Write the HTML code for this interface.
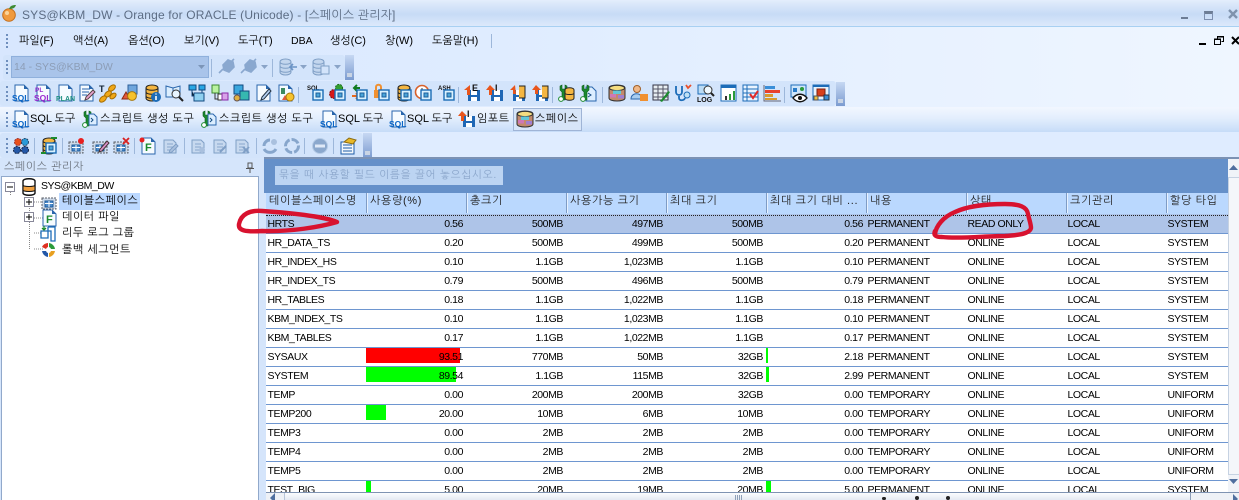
<!DOCTYPE html>
<html lang="ko"><head><meta charset="utf-8"><title>Orange for ORACLE</title>
<style>
html{margin:0;padding:0;overflow:hidden;width:1239px;height:500px}
body{margin:0;padding:0;width:1239px;height:500px;overflow:hidden;position:relative;background:#dfecff;font-family:"Liberation Sans","NanumGothic","Noto Sans CJK KR",sans-serif;color:#000}
div,span,svg{position:absolute}
.t{white-space:nowrap;font-size:11px;line-height:14px}
.pill{background:#d3e4fb;border-radius:3px}
.chev{background:linear-gradient(#c6d8f3,#7b9bd0);width:9px}
.chev:after{content:"";position:absolute;left:2px;bottom:3px;width:5px;height:4px;background:#c9d4e4}
.grip{left:6px;width:2px;border-left:2px dotted #6f8fbd}
.sep{width:1px;background:#9db7da}
.m{top:34px}
svg.i{width:18px;height:18px;overflow:visible}
svg text{font-family:"Liberation Sans",sans-serif;font-weight:bold}
.r2 svg.i{top:3px}.r4 svg.i{top:4px}.r3 svg.i{top:3px}
.r2 .sep{top:6px;height:16px}.r4 .sep{top:5px;height:16px}
.r3 .t{letter-spacing:.55px}
.r3 .s{letter-spacing:0}
.h{top:0;height:20px;width:96px;border-left:1px solid #7f9cc5;box-shadow:inset 1px 0 #e6f1ff;font-size:11px;line-height:16px;padding-left:3px;color:#222;white-space:nowrap;letter-spacing:.65px;overflow:hidden}
table{position:absolute;left:0;top:1px;width:1000px;border-collapse:collapse;table-layout:fixed;font-size:10.5px;letter-spacing:-.42px;color:#000}
td{height:18px;padding:0 3px 0 0;border-bottom:1px solid #6e96d0;text-align:right;white-space:nowrap;overflow:hidden;line-height:18px}
td:nth-child(1),td:nth-child(7),td:nth-child(8),td:nth-child(9),td:nth-child(10){text-align:left;padding:0 0 0 1.5px}
.tr{left:62px;font-size:11px;letter-spacing:.55px}
</style></head><body>
<svg width="0" height="0" style="left:0;top:0"><defs>
<symbol id="d" viewBox="0 0 18 18"><path d="M3 1h9l4 4v12H3z" fill="#f6fbff" stroke="#2a66ac"/><path d="M12 1v4h4z" fill="#2a66ac"/></symbol>
<symbol id="db" viewBox="0 0 18 18"><path d="M3 4c0-4 12-4 12 0v10c0 4-12 4-12 0z" fill="#f4b642" stroke="#222"/><path d="M3 4c0 3 12 3 12 0M3 8c0 3 12 3 12 0M3 12c0 3 12 3 12 0" fill="none" stroke="#222"/></symbol>
<symbol id="dg" viewBox="0 0 18 18"><path d="M1 4c0-4 11-4 11 0v10c0 4-11 4-11 0z" fill="#c3d6ee" stroke="#7f9fc6"/><path d="M1 4c0 3 11 3 11 0M1 8c0 3 11 3 11 0M1 12c0 3 11 3 11 0" fill="none" stroke="#7f9fc6"/></symbol>
<symbol id="w" viewBox="0 0 18 18"><rect x="6" y="6" width="10" height="10" fill="#d9f2ff" stroke="#1b6cb5" stroke-width="1.400"/><rect x="9" y="9" width="4" height="4" fill="#4aa5d8" stroke="#1b5e9b"/></symbol>
<symbol id="wr" viewBox="0 0 18 18"><path d="M3 2v4l2 2v8h3V8l2-2V2L8 1v4H5V1z" fill="#1c8a2e" stroke="#0d5c1a" stroke-width=".6"/><circle cx="4" cy="15" r="2.400" fill="#fff" stroke="#1c8a2e"/></symbol>
<symbol id="sp" viewBox="0 0 18 18"><path d="M1 4c0-4 16-4 16 0v10c0 4-16 4-16 0z" fill="#c38a6c" stroke="#333"/><ellipse cx="9" cy="4" rx="7.500" ry="2.600" fill="#f5dd80" stroke="#333"/><rect x="5" y="6.500" width="8" height="3.500" fill="#63c7d8"/><rect x="2" y="10" width="6" height="3.500" fill="#cf78b6"/><rect x="10" y="11" width="6" height="3.500" fill="#a07fd0"/></symbol>
<symbol id="disk" viewBox="0 0 18 18"><path d="M5 6h12v11H5z" fill="#1f67b5"/><rect x="8" y="6" width="6" height="5" fill="#fff"/><rect x="8" y="13" width="6" height="4" fill="#fff"/></symbol>
<symbol id="g" viewBox="0 0 18 18"><rect x="2" y="5" width="14" height="11" fill="#cdd9e8" stroke="#5a5f68" stroke-dasharray="2 1"/><rect x="5" y="8" width="8" height="6" fill="#4a8acb" stroke="#1f5a99"/><path d="M5 10.500h8M9 8v6" stroke="#fff"/></symbol>
<symbol id="gd" viewBox="0 0 18 18"><path d="M3 3h9l3 3v10H3z" fill="#c7d9ef" stroke="#7f9fc6"/><path d="M6 7h6M6 10h6M6 13h6" stroke="#88a6cc"/></symbol>
<symbol id="pl" viewBox="0 0 20 16"><path d="M2 15l4-4M6 7l5-5 5 2 1 5-5 5-5-2zM13 5l4-4" fill="#8aa8cf" stroke="#8aa8cf" stroke-width="1.600"/></symbol>
</defs></svg>

<!-- title bar -->
<div style="left:0;top:0;width:1239px;height:26px;background:linear-gradient(#e4eefc 0,#dbe8fa 14%,#c7dbf6 55%,#dce9fb 100%)"></div>
<div style="left:0;top:26px;width:1239px;height:1px;background:#a8d0f2"></div>
<svg style="left:1px;top:4px" width="17" height="18"><circle cx="8" cy="11" r="6.300" fill="#f09a3e" stroke="#c26f1e"/><circle cx="6" cy="9" r="2" fill="#fbd49a"/><path d="M8 5c1-3 3-4 7-4-1 3-3 4-7 4z" fill="#3d8a33"/></svg>
<div class="t" style="left:22px;top:8px;font-size:12px;color:#5d6d84;letter-spacing:.17px">SYS@KBM_DW - Orange for ORACLE (Unicode) - [스페이스 관리자]</div>
<div style="left:1181px;top:17px;width:7px;height:2px;background:#6d7d95"></div>
<div style="left:1204px;top:11px;width:7px;height:5px;border:1px solid #7e90b0;border-top:3px solid #6d7d95"></div>
<svg style="left:1228px;top:9px" width="11" height="10"><path d="M1 1l8 8M9 1L1 9" stroke="#7f93ad" stroke-width="2.400"/></svg>

<!-- menu -->
<div style="left:0;top:27px;width:1239px;height:80px;background:linear-gradient(90deg,#d8e7fe,#dfecff 40%,#eff6ff)"></div>
<div class="grip" style="top:34px;height:14px"></div>
<div class="t m" style="left:19px">파일(F)</div>
<div class="t m" style="left:73px">액션(A)</div>
<div class="t m" style="left:128px">옵션(O)</div>
<div class="t m" style="left:184px">보기(V)</div>
<div class="t m" style="left:238px">도구(T)</div>
<div class="t m" style="left:291px;font-size:10.500px">DBA</div>
<div class="t m" style="left:330px">생성(C)</div>
<div class="t m" style="left:385px">창(W)</div>
<div class="t m" style="left:432px">도움말(H)</div>
<div class="sep" style="left:491px;top:34px;height:14px"></div>
<div style="left:1199px;top:43px;width:7px;height:2px;background:#000"></div>
<svg style="left:1214px;top:36px" width="10" height="10"><path d="M3.500 2.500V.5h6v5h-2M.5 3.500h6v5h-6z" fill="none" stroke="#000"/><path d="M0 3h7M3 1h7" stroke="#000" stroke-width="1"/></svg>
<svg style="left:1231px;top:36px" width="8" height="9"><path d="M1 1l7 7M8 1L1 8" stroke="#000" stroke-width="2"/></svg>

<!-- toolbar 1 -->
<div class="pill" style="left:3px;top:55px;width:342px;height:25px"></div>
<div class="chev" style="left:345px;top:55px;height:25px"></div>
<div class="grip" style="top:60px;height:14px"></div>
<div style="left:11px;top:56px;width:196px;height:20px;background:#a9c4ea;border:1px solid #8fb0dc"></div>
<div class="t" style="left:14px;top:60px;color:#8c9db6;font-size:10.500px">14 - SYS@KBM_DW</div>
<svg style="left:198px;top:65px" width="7" height="4"><path d="M0 0h7L3.500 4z" fill="#7c95b8"/></svg>
<div class="sep" style="left:211px;top:59px;height:18px"></div>
<svg class="i" style="left:217px;top:58px;width:20px;height:16px"><use href="#pl" width="20" height="16"/></svg>
<svg class="i" style="left:239px;top:58px;width:20px;height:16px"><use href="#pl" width="20" height="16"/></svg>
<svg style="left:261px;top:65px" width="7" height="4"><path d="M0 0h7L3.500 4z" fill="#8aa4c7"/></svg>
<div class="sep" style="left:272px;top:59px;height:18px"></div>
<svg class="i" style="left:279px;top:58px"><use href="#dg"/><path d="M18 9h-7m3-3l-3 3 3 3" fill="none" stroke="#6b94c6" stroke-width="1.600"/></svg>
<svg style="left:300px;top:65px" width="7" height="4"><path d="M0 0h7L3.500 4z" fill="#8aa4c7"/></svg>
<svg class="i" style="left:312px;top:58px"><use href="#dg"/><rect x="9" y="8" width="8" height="8" fill="#d3e4fb" stroke="#7f9fc6"/></svg>
<svg style="left:334px;top:65px" width="7" height="4"><path d="M0 0h7L3.500 4z" fill="#8aa4c7"/></svg>

<!-- toolbar 2 -->
<div class="pill r2" style="top:81px;width:836px;height:25px;left:0">
<div class="grip" style="top:5px;height:15px"></div>
<svg class="i" style="left:12px"><use href="#d"/><text x="0" y="17" font-size="8.500" fill="#0a66c8">SQL</text></svg>
<svg class="i" style="left:34px"><use href="#d"/><text x="1" y="8" font-size="6.500" fill="#9a2bd0">PL</text><text x="0" y="17" font-size="8.500" fill="#9a2bd0">SQL</text></svg>
<svg class="i" style="left:56px"><use href="#d"/><text x="0" y="17" font-size="7" fill="#1d8f80">PLAN</text></svg>
<svg class="i" style="left:77px"><use href="#d"/><path d="M5 5h8M5 8h7M5 11h5" stroke="#2a66ac"/><path d="M8 16l1-3 7-7 2 2-7 7z" fill="#e9a4d0" stroke="#544"/></svg>
<svg class="i" style="left:99px"><text x="0" y="8" font-size="9" fill="#123">T</text><ellipse cx="13" cy="4" rx="4" ry="2.400" transform="rotate(-40 13 4)" fill="#f0a818" stroke="#a66c00"/><ellipse cx="9" cy="10" rx="4" ry="2.400" transform="rotate(-40 9 10)" fill="#f0a818" stroke="#a66c00"/><ellipse cx="4" cy="15" rx="4" ry="2.400" transform="rotate(-40 4 15)" fill="#f0a818" stroke="#a66c00"/><ellipse cx="14" cy="12" rx="3.600" ry="2.200" transform="rotate(-40 14 12)" fill="#f0a818" stroke="#a66c00"/></svg>
<svg class="i" style="left:121px"><rect x="7" y="1" width="9" height="9" fill="#6fa6dd" stroke="#2d5f9a"/><path d="M1 15l4-7 4 7z" fill="#e25b3c" stroke="#8e2a12"/><circle cx="11" cy="12" r="4.400" fill="#f6c22c" stroke="#a87808"/></svg>
<svg class="i" style="left:143px"><use href="#db"/><circle cx="13" cy="13" r="5" fill="#1d6cb8"/><path d="M13 9.500v1M13 12v4" stroke="#fff" stroke-width="1.600"/></svg>
<svg class="i" style="left:165px"><path d="M1 2l7 2 7-2v11H1z" fill="#dbeeff" stroke="#2a66ac"/><path d="M8 4v9" stroke="#2a66ac"/><circle cx="11" cy="10" r="4" fill="#e8f5ff" stroke="#333"/><path d="M14 13l4 4" stroke="#222" stroke-width="2"/></svg>
<svg class="i" style="left:188px"><rect x="1" y="1" width="7" height="5" fill="#29a7e4" stroke="#124a80"/><rect x="11" y="1" width="6" height="5" fill="#29a7e4" stroke="#124a80"/><rect x="6" y="9" width="10" height="8" fill="#8fd0f0" stroke="#124a80"/><path d="M4 6v6h2M14 6v3" stroke="#124a80"/></svg>
<svg class="i" style="left:210px"><rect x="2" y="1" width="7" height="8" fill="#b9f2a0" stroke="#3c8a30"/><path d="M5 9v6h3" fill="none" stroke="#333"/><rect x="8" y="10" width="4" height="6" fill="#fff" stroke="#333"/><rect x="12" y="9" width="6" height="7" fill="#d8a2e8" stroke="#8b2aa8"/></svg>
<svg class="i" style="left:232px"><rect x="2" y="1" width="9" height="9" fill="#3ba7dd" stroke="#124a80"/><rect x="8" y="7" width="9" height="9" fill="#36b8b0" stroke="#124a80"/><circle cx="5" cy="14" r="3" fill="#e0b040" stroke="#655"/></svg>
<svg class="i" style="left:254px"><use href="#d"/><path d="M7 16l1-3 7-8 2 2-7 8z" fill="#b4cff0" stroke="#234"/></svg>
<svg class="i" style="left:276px"><use href="#d"/><rect x="5" y="4" width="4" height="6" fill="#3c8a60"/><path d="M6 16l3-5 3 5z" fill="#e25b3c"/><circle cx="14" cy="13" r="4" fill="#f6c22c" stroke="#a87808"/></svg>
<div class="sep" style="left:298px"></div>
<svg class="i" style="left:307px"><text x="0" y="6" font-size="6" fill="#111">SQL</text><use href="#w"/></svg>
<svg class="i" style="left:329px"><circle cx="5" cy="10" r="4.400" fill="#d81818" stroke="#801010" stroke-dasharray="2 1"/><circle cx="10" cy="4" r="3.600" fill="#33a030" stroke="#1c6c1c" stroke-dasharray="2 1"/><use href="#w"/></svg>
<svg class="i" style="left:351px"><path d="M9 4H3M6 1L3 4l3 3" fill="none" stroke="#0f7a20" stroke-width="2"/><path d="M1 12h7M5 9l3 3-3 3" fill="none" stroke="#e8691c" stroke-width="2"/><use href="#w"/></svg>
<svg class="i" style="left:373px"><rect x="1" y="6" width="9" height="8" fill="#f09030"/><path d="M3 6V3c0-3 5-3 5 0v3" fill="none" stroke="#f09030" stroke-width="2"/><use href="#w"/></svg>
<svg class="i" style="left:395px"><use href="#db"/><use href="#w"/></svg>
<svg class="i" style="left:415px"><circle cx="7" cy="8" r="6.500" fill="#fff" stroke="#d8602a" stroke-width="1.600"/><path d="M7 4v4l3 2" stroke="#333" fill="none"/><use href="#w"/></svg>
<svg class="i" style="left:438px"><text x="0" y="6" font-size="6" fill="#111">ASH</text><use href="#w"/></svg>
<div class="sep" style="left:458px"></div>
<svg class="i" style="left:463px"><use href="#disk"/><text x="9" y="7" font-size="9" fill="#111">E</text><path d="M7 1L1 6h3v5h3z" fill="#e8551c"/></svg>
<svg class="i" style="left:486px"><use href="#disk"/><text x="9" y="7" font-size="9" fill="#111">I</text><path d="M4 1l5 5H6v5H3V6H0z" fill="#e8551c"/></svg>
<svg class="i" style="left:508px"><use href="#disk"/><path d="M11 2h6v12h-6" fill="#f4b642" stroke="#222"/><path d="M7 1L2 6h3v4h3z" fill="#e8551c"/></svg>
<svg class="i" style="left:531px"><use href="#disk"/><path d="M11 2h6v12h-6" fill="#f4b642" stroke="#222"/><path d="M5 1l5 5H7v4H4V6H1z" fill="#e8551c"/></svg>
<div class="sep" style="left:552px"></div>
<svg class="i" style="left:557px"><use href="#wr"/><path d="M8 6c0-3 9-3 9 0v8c0 3-9 3-9 0z" fill="#f4b642" stroke="#222"/><path d="M8 9c0 2 9 2 9 0" fill="none" stroke="#222"/></svg>
<svg class="i" style="left:579px"><path d="M7 3h6l4 4v10H7z" fill="#dceeff" stroke="#2a66ac"/><path d="M9 9l3 2-3 2" fill="none" stroke="#124a80"/><use href="#wr"/></svg>
<div class="sep" style="left:602px"></div>
<svg class="i" style="left:608px"><use href="#sp"/></svg>
<svg class="i" style="left:630px"><circle cx="7" cy="5" r="3.500" fill="#f0b888" stroke="#a0602a"/><path d="M1 15c0-7 11-7 11 0z" fill="#a8cdf0" stroke="#2a66ac"/><rect x="10" y="10" width="8" height="7" fill="#f09030"/></svg>
<svg class="i" style="left:652px"><rect x="1" y="1" width="15" height="15" fill="#e8eef2" stroke="#334"/><path d="M1 5h15M1 9h15M1 13h15M6 1v15M11 1v15" stroke="#556"/><path d="M8 17l6-7 2-3 2 1-2 3-6 7z" fill="#1c8a2e"/></svg>
<svg class="i" style="left:674px"><path d="M2 2v6c0 4 6 4 6 0V2M5 12v2c0 3 5 3 6 0" fill="none" stroke="#1c6cb8" stroke-width="1.800"/><circle cx="13" cy="11" r="3" fill="#bfe0f5" stroke="#1c6cb8"/><path d="M12 1l2 3 3-3" fill="none" stroke="#e8502c" stroke-width="1.800"/></svg>
<svg class="i" style="left:697px"><rect x="1" y="1" width="10" height="9" fill="#bcdcf5" stroke="#1c6cb8"/><circle cx="11" cy="6" r="4" fill="#eef8ff" stroke="#333"/><path d="M14 9l3 3" stroke="#222" stroke-width="2"/><text x="0" y="18" font-size="7" font-weight="400" fill="#111">LOG</text></svg>
<svg class="i" style="left:720px"><rect x="1" y="1" width="15" height="16" fill="#fff" stroke="#1c6cb8"/><rect x="1" y="1" width="15" height="3" fill="#1c6cb8"/><rect x="5" y="12" width="2" height="4" fill="#333"/><rect x="9" y="10" width="2" height="6" fill="#2a9a3a"/><rect x="13" y="7" width="2" height="9" fill="#2a9a3a"/></svg>
<svg class="i" style="left:742px"><rect x="1" y="1" width="15" height="16" fill="#eaf4ff" stroke="#1c6cb8"/><path d="M1 5h15M1 9h15M1 13h15M5 1v16" stroke="#1c6cb8"/><path d="M8 10l3 4 5-7" fill="none" stroke="#e02a2a" stroke-width="2"/></svg>
<svg class="i" style="left:763px"><path d="M1 1v16h17" fill="none" stroke="#667"/><rect x="2" y="2" width="10" height="3" fill="#3a8ed8"/><rect x="2" y="6" width="15" height="3" fill="#e8402c"/><rect x="2" y="10" width="8" height="3" fill="#d89a30"/><rect x="2" y="14" width="12" height="2" fill="#d89a30"/></svg>
<div class="sep" style="left:784px"></div>
<svg class="i" style="left:790px"><rect x="1" y="1" width="15" height="12" fill="#cfe6fb" stroke="#1c6cb8"/><rect x="3" y="4" width="4" height="4" fill="#2a7cc8"/><circle cx="12" cy="5" r="2" fill="#2a9a3a"/><path d="M3 14c4-5 10-5 14 0-4 5-10 5-14 0z" fill="#fff" stroke="#111" stroke-width="1.400"/><circle cx="10" cy="14" r="2" fill="#111"/></svg>
<svg class="i" style="left:812px"><rect x="1" y="1" width="16" height="15" fill="#e8f2fc" stroke="#1c6cb8"/><rect x="1" y="1" width="16" height="2" fill="#1c6cb8"/><rect x="5" y="5" width="8" height="7" fill="#d8401c" stroke="#7a2010"/><rect x="2" y="12" width="4" height="4" fill="#f0c040" stroke="#555"/><rect x="12" y="11" width="5" height="5" fill="#3a8ed8" stroke="#234"/></svg>
</div>
<div class="chev" style="left:836px;top:82px;height:24px"></div>

<!-- toolbar 3 -->
<div class="r3" style="left:0;top:107px;width:1239px;height:25px;background:linear-gradient(#f2f7ff,#e3eefd 45%,#c6dcf8)">
<div class="grip" style="top:5px;height:15px"></div>
<svg class="i" style="left:12px"><use href="#d"/><text x="0" y="17" font-size="8.500" fill="#0a66c8">SQL</text></svg>
<div class="t s" style="left:30px;top:5px">SQL 도구</div>
<svg class="i" style="left:81px"><use href="#wr"/><path d="M8 4h5l3 3v8H8z" fill="#dceeff" stroke="#2a66ac"/><path d="M10 8l2 2-2 2" fill="none" stroke="#124a80"/></svg>
<div class="t" style="left:100px;top:5px">스크립트 생성 도구</div>
<svg class="i" style="left:200px"><use href="#wr"/><path d="M8 4h5l3 3v8H8z" fill="#dceeff" stroke="#2a66ac"/><path d="M10 8l2 2-2 2" fill="none" stroke="#124a80"/></svg>
<div class="t" style="left:219px;top:5px">스크립트 생성 도구</div>
<svg class="i" style="left:320px"><use href="#d"/><text x="0" y="17" font-size="8.500" fill="#0a66c8">SQL</text></svg>
<div class="t s" style="left:338px;top:5px">SQL 도구</div>
<svg class="i" style="left:389px"><use href="#d"/><text x="0" y="17" font-size="8.500" fill="#0a66c8">SQL</text></svg>
<div class="t s" style="left:407px;top:5px">SQL 도구</div>
<svg class="i" style="left:458px"><use href="#disk"/><text x="9" y="7" font-size="9" fill="#111">I</text><path d="M4 1l5 5H6v5H3V6H0z" fill="#e8551c"/></svg>
<div class="t" style="left:477px;top:5px">임포트</div>
<div style="left:513px;top:1px;width:67px;height:21px;border:1px solid #9fb4d6;background:#d7e5f8"></div>
<svg class="i" style="left:516px"><use href="#sp"/></svg>
<div class="t" style="left:535px;top:5px">스페이스</div>
</div>

<!-- toolbar 4 -->
<div style="left:0;top:132px;width:1239px;height:26px;background:#dfecff"></div>
<div class="pill r4" style="left:0;top:133px;width:363px;height:25px">
<div class="grip" style="top:5px;height:15px"></div>
<svg class="i" style="left:12px"><circle cx="6" cy="5" r="3.500" fill="#e8501c" stroke-dasharray="2 1" stroke="#933"/><circle cx="13" cy="5" r="3.500" fill="#2a9ad8" stroke-dasharray="2 1" stroke="#246"/><circle cx="5" cy="13" r="3.500" fill="#2458a8" stroke-dasharray="2 1" stroke="#124"/><circle cx="13" cy="13" r="3.500" fill="#2458a8" stroke-dasharray="2 1" stroke="#124"/></svg>
<div class="sep" style="left:34px"></div>
<svg class="i" style="left:40px"><use href="#db"/><use href="#w"/><path d="M11 1h6M1 16h5" stroke="#1c8a2e" stroke-width="2"/></svg>
<div class="sep" style="left:62px"></div>
<svg class="i" style="left:67px"><use href="#g"/><circle cx="14" cy="4" r="3" fill="#e82020"/></svg>
<svg class="i" style="left:91px"><use href="#g"/><path d="M8 15l1-3 7-8 2 2-7 8z" fill="#d890c8" stroke="#433"/></svg>
<svg class="i" style="left:112px"><use href="#g"/><path d="M11 1l6 6M17 1l-6 6" stroke="#d82020" stroke-width="1.800"/></svg>
<div class="sep" style="left:134px"></div>
<svg class="i" style="left:139px"><use href="#d"/><text x="6" y="14" font-size="11" fill="#1c8a2e">F</text><circle cx="3" cy="3" r="2.500" fill="#e82020"/></svg>
<svg class="i" style="left:161px"><use href="#gd"/><path d="M8 16l1-3 6-6 2 2-6 6z" fill="#a9c0de" stroke="#7f9fc6"/></svg>
<div class="sep" style="left:184px"></div>
<svg class="i" style="left:189px"><use href="#gd"/><circle cx="13" cy="13" r="3" fill="#a9c0de"/></svg>
<svg class="i" style="left:211px"><use href="#gd"/><path d="M9 15l6-6" stroke="#7f9fc6" stroke-width="2"/></svg>
<svg class="i" style="left:233px"><use href="#gd"/><path d="M10 10l6 6M16 10l-6 6" stroke="#7f9fc6" stroke-width="1.800"/></svg>
<div class="sep" style="left:256px"></div>
<svg class="i" style="left:261px"><path d="M3 9a6 6 0 0 1 6-6" fill="none" stroke="#87a6cc" stroke-width="3"/><path d="M3 12a7 7 0 0 0 12 0" fill="none" stroke="#87a6cc" stroke-width="3"/><circle cx="13" cy="5" r="3" fill="#a9c0de"/></svg>
<svg class="i" style="left:283px"><circle cx="9" cy="9" r="6.500" fill="none" stroke="#87a6cc" stroke-width="3" stroke-dasharray="8 2"/></svg>
<div class="sep" style="left:304px"></div>
<svg class="i" style="left:311px"><circle cx="9" cy="9" r="7.500" fill="#8ba8cd" stroke="#b6cbe6"/><rect x="4" y="7.500" width="10" height="3" fill="#dfe9f7"/></svg>
<div class="sep" style="left:333px"></div>
<svg class="i" style="left:339px"><rect x="2" y="5" width="13" height="12" fill="#f4f8fc" stroke="#1c5ca8"/><path d="M4 8h9M4 11h9M4 14h9" stroke="#1c5ca8"/><path d="M5 5l5-4 7 2-3 4z" fill="#e8b828" stroke="#8a6a10"/></svg>
</div>
<div class="chev" style="left:363px;top:133px;height:25px"></div>

<!-- left panel -->
<div style="left:0;top:158px;width:264px;height:342px;background:#d5e5fb"></div>
<div style="left:264px;top:157px;width:975px;height:2px;background:#7c92b4"></div>
<div class="t" style="left:4px;top:160px;color:#6f7782;letter-spacing:.55px">스페이스 관리자</div>
<svg style="left:246px;top:162px" width="8" height="11"><path d="M2 1h4v5H2zM0 6.500h8M4 7v4" fill="none" stroke="#555"/></svg>
<div style="left:1px;top:176px;width:256px;height:322px;background:#fff;border:1px solid #91a9cb;border-bottom:0;height:324px"></div>
<svg style="left:5px;top:182px" width="60" height="80" fill="none"><path d="M5.500 10v3M24.500 20v48M29 20h9M29 36h9M29 51h9M29 67h9" stroke="#888" stroke-dasharray="1 1"/><rect x=".5" y=".5" width="9" height="9" fill="#fff" stroke="#889"/><path d="M2 5h6" stroke="#000"/><rect x="19.500" y="15.500" width="9" height="9" fill="#fff" stroke="#889"/><path d="M21 20h6M24 17v6" stroke="#000"/><rect x="19.500" y="30.500" width="9" height="9" fill="#fff" stroke="#889"/><path d="M21 35h6M24 32v6" stroke="#000"/></svg>
<svg class="i" style="left:20px;top:178px"><path d="M3 3c0-3 12-3 12 0v12c0 3-12 3-12 0z" fill="#fff" stroke="#111" stroke-width="1.400"/><path d="M3 7c0 2 12 2 12 0v5c0 2-12 2-12 0z" fill="#f0a040" stroke="#111"/></svg>
<div class="t" style="left:41px;top:179px;font-size:10.500px;letter-spacing:-.5px">SYS@KBM_DW</div>
<svg class="i" style="left:40px;top:193px"><use href="#g"/></svg>
<svg class="i" style="left:40px;top:209px"><use href="#d"/><text x="6" y="14" font-size="11" fill="#1c8a2e">F</text></svg>
<svg class="i" style="left:39px;top:225px"><path d="M9 2v11H2V6h7M9 2h7v14h-4V6H9" fill="#fff" stroke="#1c6cb8" stroke-width="1.300"/><path d="M5 1v4M3 3l2 2 2-2" fill="none" stroke="#1c8a2e" stroke-width="1.300"/></svg>
<svg class="i" style="left:39px;top:241px"><path d="M3 6a7 7 0 0 1 6-4v4a3 3 0 0 0-2 2z" fill="#e03020"/><path d="M10 2a7 7 0 0 1 6 6h-4a3 3 0 0 0-2-2z" fill="#2a9a3a"/><path d="M16 10a7 7 0 0 1-6 6v-4a3 3 0 0 0 2-2z" fill="#e8a020"/><path d="M9 16a7 7 0 0 1-6-6h4a3 3 0 0 0 2 2z" fill="#2458a8"/></svg>
<div style="left:59px;top:193px;width:81px;height:17px;background:#bbd8ff"></div>
<div class="t tr" style="top:194px">테이블스페이스</div>
<div class="t tr" style="top:210px">데이터 파일</div>
<div class="t tr" style="top:226px">리두 로그 그룹</div>
<div class="t tr" style="top:243px">롤백 세그먼트</div>

<!-- right panel -->
<div style="left:264px;top:159px;width:975px;height:341px;background:#d5e5fb"></div>
<div style="left:266px;top:159px;width:962px;height:34px;background:#6590c9"></div>
<div style="left:264px;top:159px;width:2px;height:34px;background:#6590c9"></div>
<div style="left:275px;top:166px;width:228px;height:19px;background:#bcd4f2"></div>
<div class="t" style="left:279px;top:168px;color:#8ba6cb;font-size:10.500px;letter-spacing:.8px">묶을 때 사용할 필드 이름을 끌어 놓으십시오.</div>
<div style="left:266px;top:193px;width:962px;height:21px;background:#bad8fe">
<div class="h" style="left:0;border:0;box-shadow:none">테이블스페이스명</div>
<div class="h" style="left:100px">사용량(%)</div>
<div class="h" style="left:200px">총크기</div>
<div class="h" style="left:300px">사용가능 크기</div>
<div class="h" style="left:400px">최대 크기</div>
<div class="h" style="left:500px">최대 크기 대비 ...</div>
<div class="h" style="left:600px">내용</div>
<div class="h" style="left:700px">상태</div>
<div class="h" style="left:800px">크기관리</div>
<div class="h" style="left:900px">할당 타입</div>
</div>
<div style="left:266px;top:214px;width:962px;height:278px;background:#fff;overflow:hidden">
<div style="left:0;top:0;width:962px;height:19px;background:#aec4e8"></div>
<div style="left:0;top:1px;width:962px;border-top:1px dotted #222"></div>
<div style="left:0;top:19px;width:962px;border-top:1px dotted #222"></div>
<div style="left:100px;top:134px;width:94px;height:15px;background:#f00"></div>
<div style="left:100px;top:153px;width:90px;height:15px;background:#0f0"></div>
<div style="left:100px;top:191px;width:20px;height:15px;background:#0f0"></div>
<div style="left:100px;top:267px;width:5px;height:15px;background:#0f0"></div>
<div style="left:500px;top:134px;width:2px;height:15px;background:#0f0"></div>
<div style="left:500px;top:153px;width:3px;height:15px;background:#0f0"></div>
<div style="left:500px;top:267px;width:5px;height:15px;background:#0f0"></div>
<table><colgroup><col style="width:100px"><col style="width:100px"><col style="width:100px"><col style="width:100px"><col style="width:100px"><col style="width:100px"><col style="width:100px"><col style="width:100px"><col style="width:100px"><col style="width:100px"></colgroup>
<tr><td>HRTS</td><td>0.56</td><td>500MB</td><td>497MB</td><td>500MB</td><td>0.56</td><td>PERMANENT</td><td>READ ONLY</td><td>LOCAL</td><td>SYSTEM</td></tr>
<tr><td>HR_DATA_TS</td><td>0.20</td><td>500MB</td><td>499MB</td><td>500MB</td><td>0.20</td><td>PERMANENT</td><td>ONLINE</td><td>LOCAL</td><td>SYSTEM</td></tr>
<tr><td>HR_INDEX_HS</td><td>0.10</td><td>1.1GB</td><td>1,023MB</td><td>1.1GB</td><td>0.10</td><td>PERMANENT</td><td>ONLINE</td><td>LOCAL</td><td>SYSTEM</td></tr>
<tr><td>HR_INDEX_TS</td><td>0.79</td><td>500MB</td><td>496MB</td><td>500MB</td><td>0.79</td><td>PERMANENT</td><td>ONLINE</td><td>LOCAL</td><td>SYSTEM</td></tr>
<tr><td>HR_TABLES</td><td>0.18</td><td>1.1GB</td><td>1,022MB</td><td>1.1GB</td><td>0.18</td><td>PERMANENT</td><td>ONLINE</td><td>LOCAL</td><td>SYSTEM</td></tr>
<tr><td>KBM_INDEX_TS</td><td>0.10</td><td>1.1GB</td><td>1,023MB</td><td>1.1GB</td><td>0.10</td><td>PERMANENT</td><td>ONLINE</td><td>LOCAL</td><td>SYSTEM</td></tr>
<tr><td>KBM_TABLES</td><td>0.17</td><td>1.1GB</td><td>1,022MB</td><td>1.1GB</td><td>0.17</td><td>PERMANENT</td><td>ONLINE</td><td>LOCAL</td><td>SYSTEM</td></tr>
<tr><td>SYSAUX</td><td>93.51</td><td>770MB</td><td>50MB</td><td>32GB</td><td>2.18</td><td>PERMANENT</td><td>ONLINE</td><td>LOCAL</td><td>SYSTEM</td></tr>
<tr><td>SYSTEM</td><td>89.54</td><td>1.1GB</td><td>115MB</td><td>32GB</td><td>2.99</td><td>PERMANENT</td><td>ONLINE</td><td>LOCAL</td><td>SYSTEM</td></tr>
<tr><td>TEMP</td><td>0.00</td><td>200MB</td><td>200MB</td><td>32GB</td><td>0.00</td><td>TEMPORARY</td><td>ONLINE</td><td>LOCAL</td><td>UNIFORM</td></tr>
<tr><td>TEMP200</td><td>20.00</td><td>10MB</td><td>6MB</td><td>10MB</td><td>0.00</td><td>TEMPORARY</td><td>ONLINE</td><td>LOCAL</td><td>UNIFORM</td></tr>
<tr><td>TEMP3</td><td>0.00</td><td>2MB</td><td>2MB</td><td>2MB</td><td>0.00</td><td>TEMPORARY</td><td>ONLINE</td><td>LOCAL</td><td>UNIFORM</td></tr>
<tr><td>TEMP4</td><td>0.00</td><td>2MB</td><td>2MB</td><td>2MB</td><td>0.00</td><td>TEMPORARY</td><td>ONLINE</td><td>LOCAL</td><td>UNIFORM</td></tr>
<tr><td>TEMP5</td><td>0.00</td><td>2MB</td><td>2MB</td><td>2MB</td><td>0.00</td><td>TEMPORARY</td><td>ONLINE</td><td>LOCAL</td><td>UNIFORM</td></tr>
<tr><td>TEST_BIG</td><td>5.00</td><td>20MB</td><td>19MB</td><td>20MB</td><td>5.00</td><td>PERMANENT</td><td>ONLINE</td><td>LOCAL</td><td>SYSTEM</td></tr>
</table>
</div>

<!-- scrollbars -->
<div style="left:1228px;top:159px;width:11px;height:341px;background:#f0f3f8"></div>
<svg style="left:1229px;top:165px" width="9" height="6"><path d="M0 5h9L4.500 0z" fill="#4f6f9f"/></svg>
<div style="left:1228px;top:177px;width:10px;height:296px;background:#f4f6fa;border:1px solid #c6d2e2;border-right:0"></div>
<svg style="left:1229px;top:479px" width="9" height="6"><path d="M0 0h9L4.500 5z" fill="#4f6f9f"/></svg>
<div style="left:266px;top:492px;width:973px;height:8px;background:#eef1f6;border-top:1px solid #7f93b2;box-sizing:border-box"></div>
<div style="left:284px;top:493px;width:905px;height:7px;background:linear-gradient(#fbfcfe,#e4e9f2);border-left:1px solid #b8c6da;border-right:1px solid #8ea0ba"></div>
<svg style="left:270px;top:493px" width="6" height="7"><path d="M5 0L0 5l5 5z" fill="#4f6f9f"/></svg>
<svg style="left:1233px;top:494px" width="6" height="6"><path d="M0 0l5 5-5 5z" fill="#4f6f9f"/></svg>
<div style="left:735px;top:495px;width:7px;height:5px;background:repeating-linear-gradient(90deg,#8fa0b8 0 1px,transparent 1px 2px)"></div>
<div style="left:882px;top:497px;width:4px;height:3px;border-radius:2px;background:#222"></div>
<div style="left:915px;top:496px;width:4px;height:4px;border-radius:2px;background:#222"></div>
<div style="left:946px;top:496px;width:4px;height:4px;border-radius:2px;background:#222"></div>

<!-- annotations -->
<svg style="left:0;top:0;pointer-events:none" width="1239" height="500" fill="none"><path d="M337 222C322 216 292 213 262 211 250 210 241 214 239 224 238 231 246 232 262 231 290 232 320 227 337 222" stroke="#d8122f" stroke-width="4.400" stroke-linecap="round"/><path d="M935 234C936 226 943 217 955 212 968 206 985 204 1005 204 1020 204 1027 207 1028 214 1029 219 1031 224 1031 228 1030 233 1022 235 1005 236 985 236 960 239 942 237 937 237 933 236 935 231" stroke="#d8122f" stroke-width="4.400" stroke-linecap="round"/></svg>
</body></html>
